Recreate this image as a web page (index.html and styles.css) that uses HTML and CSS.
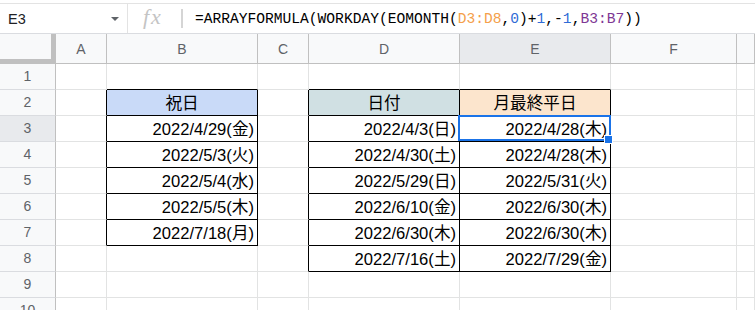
FILE: index.html
```html
<!DOCTYPE html>
<html lang="ja">
  <head>
    <meta charset="utf-8">
    <title>月最終平日 - スプレッドシート</title>
    <link rel="stylesheet" href="styles.css">
  </head>
  <body>
    <div class="top-edge"></div>
    <div class="formula-bar">
      <div class="name-box">
        <span class="cell-ref">E3</span>
        <span class="caret"></span>
      </div>
      <div class="fx">fx</div>
      <div class="fx-sep"></div>
      <div class="formula">=ARRAYFORMULA(WORKDAY(EOMONTH(<span class="ref-a">D3:D8</span>,<span class="num">0</span>)+<span class="num">1</span>,-<span class="num">1</span>,<span class="ref-b">B3:B7</span>))</div>
    </div>

    <div class="sheet">
      <!-- column headers -->
      <div class="corner"></div>
      <div class="col-head">A</div>
      <div class="col-head">B</div>
      <div class="col-head">C</div>
      <div class="col-head">D</div>
      <div class="col-head active">E</div>
      <div class="col-head">F</div>
      <div class="col-head"></div>

      <!-- row 1 -->
      <div class="row-head">1</div>
      <div class="cell"></div>
      <div class="cell edge-b"></div>
      <div class="cell"></div>
      <div class="cell edge-b"></div>
      <div class="cell edge-b"></div>
      <div class="cell"></div>
      <div class="cell"></div>

      <!-- row 2 -->
      <div class="row-head">2</div>
      <div class="cell edge-r"></div>
      <div class="cell boxed head-blue">祝日</div>
      <div class="cell edge-r"></div>
      <div class="cell boxed head-cyan">日付</div>
      <div class="cell boxed head-orange">月最終平日</div>
      <div class="cell"></div>
      <div class="cell"></div>

      <!-- row 3 -->
      <div class="row-head active">3</div>
      <div class="cell edge-r"></div>
      <div class="cell boxed">2022/4/29(金)</div>
      <div class="cell edge-r"></div>
      <div class="cell boxed">2022/4/3(日)</div>
      <div class="cell boxed selected">2022/4/28(木)<span class="fill-handle"></span></div>
      <div class="cell"></div>
      <div class="cell"></div>

      <!-- row 4 -->
      <div class="row-head">4</div>
      <div class="cell edge-r"></div>
      <div class="cell boxed">2022/5/3(火)</div>
      <div class="cell edge-r"></div>
      <div class="cell boxed">2022/4/30(土)</div>
      <div class="cell boxed">2022/4/28(木)</div>
      <div class="cell"></div>
      <div class="cell"></div>

      <!-- row 5 -->
      <div class="row-head">5</div>
      <div class="cell edge-r"></div>
      <div class="cell boxed">2022/5/4(水)</div>
      <div class="cell edge-r"></div>
      <div class="cell boxed">2022/5/29(日)</div>
      <div class="cell boxed">2022/5/31(火)</div>
      <div class="cell"></div>
      <div class="cell"></div>

      <!-- row 6 -->
      <div class="row-head">6</div>
      <div class="cell edge-r"></div>
      <div class="cell boxed">2022/5/5(木)</div>
      <div class="cell edge-r"></div>
      <div class="cell boxed">2022/6/10(金)</div>
      <div class="cell boxed">2022/6/30(木)</div>
      <div class="cell"></div>
      <div class="cell"></div>

      <!-- row 7 -->
      <div class="row-head">7</div>
      <div class="cell edge-r"></div>
      <div class="cell boxed">2022/7/18(月)</div>
      <div class="cell edge-r"></div>
      <div class="cell boxed">2022/6/30(木)</div>
      <div class="cell boxed">2022/6/30(木)</div>
      <div class="cell"></div>
      <div class="cell"></div>

      <!-- row 8 -->
      <div class="row-head">8</div>
      <div class="cell"></div>
      <div class="cell"></div>
      <div class="cell edge-r"></div>
      <div class="cell boxed">2022/7/16(土)</div>
      <div class="cell boxed">2022/7/29(金)</div>
      <div class="cell"></div>
      <div class="cell"></div>

      <!-- row 9 -->
      <div class="row-head">9</div>
      <div class="cell"></div>
      <div class="cell"></div>
      <div class="cell"></div>
      <div class="cell"></div>
      <div class="cell"></div>
      <div class="cell"></div>
      <div class="cell"></div>

      <!-- row 10 -->
      <div class="row-head">10</div>
      <div class="cell"></div>
      <div class="cell"></div>
      <div class="cell"></div>
      <div class="cell"></div>
      <div class="cell"></div>
      <div class="cell"></div>
      <div class="cell"></div>
    </div>
  </body>
</html>
```

FILE: styles.css
```css
body {
  margin: 0;
  background: #fff;
  font-family: "Liberation Sans", Arial, "Noto Sans CJK JP", sans-serif;
  overflow: hidden;
}

.top-edge {
  height: 3px;
  border-bottom: 1px solid #e3e3e3;
}

/* formula bar */
.formula-bar {
  display: flex;
  align-items: center;
  height: 29px;
  border-bottom: 1px solid #dadce0;
}

.name-box {
  box-sizing: border-box;
  width: 128px;
  height: 100%;
  display: flex;
  align-items: center;
  justify-content: space-between;
  padding: 0 8px 0 8px;
  border-right: 1px solid #e3e3e3;
}

.cell-ref {
  font-size: 14.5px;
  color: #202124;
}

.caret {
  width: 0;
  height: 0;
  border-left: 4px solid transparent;
  border-right: 4px solid transparent;
  border-top: 4px solid #5f6368;
  margin-top: 1px;
}

.fx {
  box-sizing: border-box;
  width: 53px;
  padding-left: 15px;
  font-family: "Liberation Serif", serif;
  font-style: italic;
  font-size: 22px;
  letter-spacing: 2px;
  color: #c4c4c4;
  margin-top: -3px;
}

.fx-sep {
  width: 2px;
  height: 19px;
  background: #d5d5d5;
}

.formula {
  margin-left: 12px;
  font-family: "Liberation Mono", "DejaVu Sans Mono", monospace;
  font-size: 14.6px;
  color: #000;
  white-space: nowrap;
}

.ref-a { color: #f4a04a; }
.ref-b { color: #7e3794; }
.num { color: #2f6bd6; }

/* grid */
.sheet {
  display: grid;
  grid-template-columns: 56px 51px 151px 51px 151px 151px 126px 18px;
  grid-template-rows: 30px repeat(10, 26px);
}

.sheet > div {
  box-sizing: border-box;
  border-right: 1px solid #e2e3e3;
  border-bottom: 1px solid #e2e3e3;
}

.corner {
  background: #f8f9fa;
  border-right: 5px solid #c0c0c0 !important;
  border-bottom: 5px solid #c0c0c0 !important;
}

.col-head {
  display: flex;
  align-items: center;
  justify-content: center;
  background: #f8f9fa;
  border-right-color: #c0c0c0 !important;
  border-bottom-color: #c0c0c0 !important;
  font-size: 14px;
  color: #5f6368;
}

.row-head {
  display: flex;
  align-items: center;
  justify-content: center;
  background: #f8f9fa;
  border-right-color: #c0c0c0 !important;
  border-bottom-color: #dadce0 !important;
  font-size: 14px;
  color: #5f6368;
  padding-bottom: 1px;
}

.col-head.active,
.row-head.active {
  background: #e8eaed;
}

.cell {
  position: relative;
  display: flex;
  align-items: flex-end;
  justify-content: flex-end;
  padding: 0 3px 2px 3px;
  font-size: 16.6px;
  line-height: 18px;
  color: #000;
  white-space: nowrap;
}

.sheet > .boxed {
  border-right-color: #000;
  border-bottom-color: #000;
}

.sheet > .edge-r { border-right-color: #000; }
.sheet > .edge-b { border-bottom-color: #000; }

.head-blue,
.head-cyan,
.head-orange {
  justify-content: center;
}

.head-blue { background: #c9daf8; }
.head-cyan { background: #d0e0e3; }
.head-orange { background: #fce5cd; }

/* active cell */
.selected::before {
  content: "";
  position: absolute;
  left: -2px;
  top: -1px;
  width: 153px;
  height: 26px;
  box-sizing: border-box;
  border: 2px solid #1a73e8;
}

.fill-handle {
  position: absolute;
  left: 144px;
  top: 19px;
  width: 7px;
  height: 7px;
  background: #1a73e8;
  border: 1px solid #fff;
  z-index: 2;
}
```
